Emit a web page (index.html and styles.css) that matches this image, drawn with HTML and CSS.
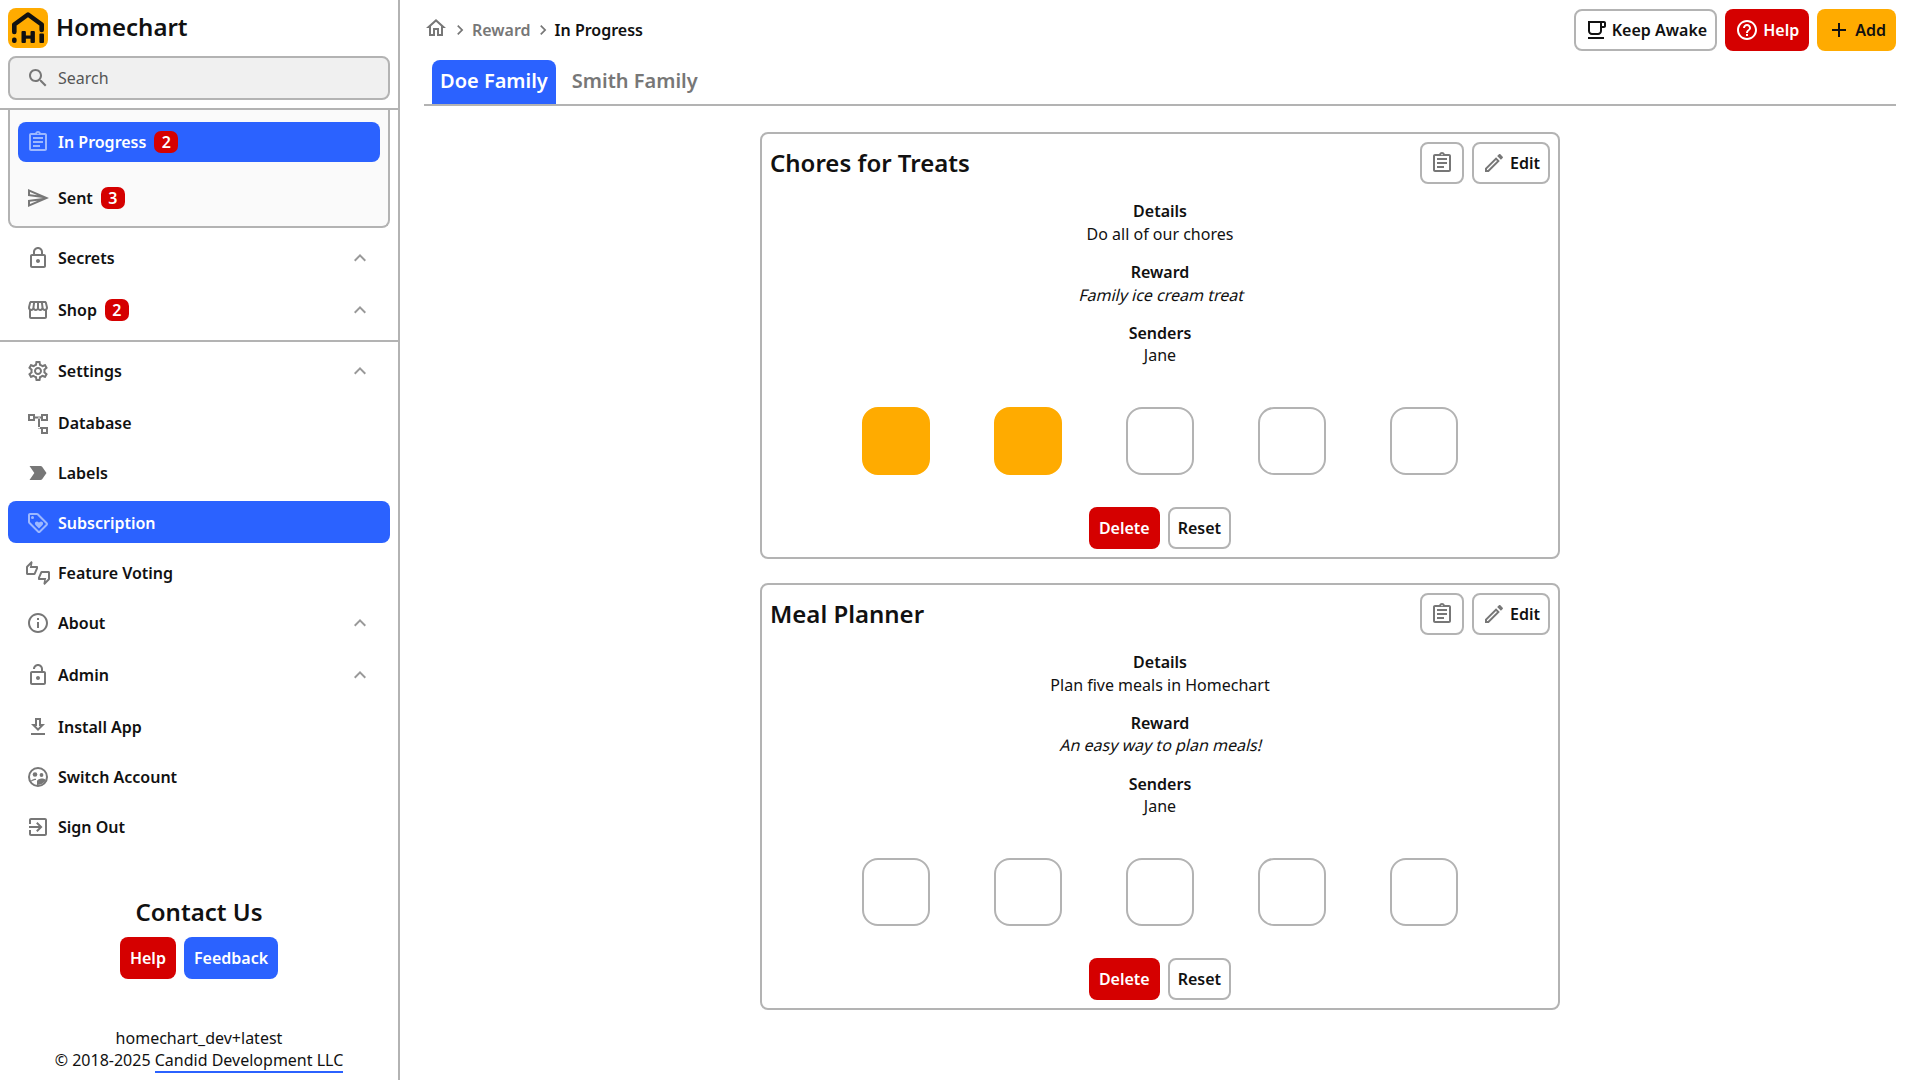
FILE: index.html
```html
<!DOCTYPE html>
<html lang="en">
<head>
    <meta charset="UTF-8">
    <meta name="viewport" content="width=device-width, initial-scale=1.0">
    <title>Homechart</title>
    <link rel="stylesheet" href="styles.css">
</head>
<body>

<!-- icon set -->
<svg class="sprite" xmlns="http://www.w3.org/2000/svg">
    <symbol id="i-search" viewBox="0 0 24 24"><path d="M15.5 14h-.79l-.28-.27C15.41 12.59 16 11.11 16 9.5 16 5.91 13.09 3 9.5 3S3 5.91 3 9.5 5.91 16 9.5 16c1.61 0 3.09-.59 4.23-1.57l.27.28v.79l5 4.99L20.49 19l-4.99-5zm-6 0C7.01 14 5 11.99 5 9.5S7.01 5 9.5 5 14 7.01 14 9.5 11.99 14 9.5 14z"/></symbol>
    <symbol id="i-clipboard" viewBox="0 0 24 24"><path d="M19 3h-4.18C14.4 1.84 13.3 1 12 1s-2.4.84-2.82 2H5c-1.1 0-2 .9-2 2v14c0 1.1.9 2 2 2h14c1.1 0 2-.9 2-2V5c0-1.1-.9-2-2-2zm-7-.25c.41 0 .75.34.75.75s-.34.75-.75.75-.75-.34-.75-.75.34-.75.75-.75zM19 19H5V5h14v14zM7 15h7v2H7zm0-4h10v2H7zm0-4h10v2H7z"/></symbol>
    <symbol id="i-send" viewBox="0 0 24 24"><path d="M4.01 6.03l7.51 3.22-7.52-1 .01-2.22m7.5 8.72L4 17.97v-2.22l7.51-1M2.01 3L2 10l15 2-15 2 .01 7L23 12 2.01 3z"/></symbol>
    <symbol id="i-lock" viewBox="0 0 24 24"><path d="M18 8h-1V6c0-2.76-2.24-5-5-5S7 3.24 7 6v2H6c-1.1 0-2 .9-2 2v10c0 1.1.9 2 2 2h12c1.1 0 2-.9 2-2V10c0-1.1-.9-2-2-2zM9 6c0-1.66 1.34-3 3-3s3 1.34 3 3v2H9V6zm9 14H6V10h12v10zm-6-3c1.1 0 2-.9 2-2s-.9-2-2-2-2 .9-2 2 .9 2 2 2z"/></symbol>
    <symbol id="i-lock-open" viewBox="0 0 24 24"><path d="M12 17c1.1 0 2-.9 2-2s-.9-2-2-2-2 .9-2 2 .9 2 2 2zm6-9h-1V6c0-2.76-2.24-5-5-5S7 3.24 7 6h2c0-1.66 1.34-3 3-3s3 1.34 3 3v2H6c-1.1 0-2 .9-2 2v10c0 1.1.9 2 2 2h12c1.1 0 2-.9 2-2V10c0-1.1-.9-2-2-2zm0 12H6V10h12v10z"/></symbol>
    <symbol id="i-shop" viewBox="0 0 24 24"><path d="M21.9 8.89l-1.05-4.37c-.22-.9-1-1.52-1.91-1.52H5.05c-.9 0-1.69.63-1.9 1.52L2.1 8.89c-.24 1.02-.02 2.06.62 2.88.08.11.19.19.28.29V19c0 1.1.9 2 2 2h14c1.1 0 2-.9 2-2v-6.94c.09-.09.2-.18.28-.28.64-.82.87-1.87.62-2.89zm-2.99-3.9l1.05 4.37c.1.42.01.84-.25 1.17-.14.18-.44.47-.94.47-.61 0-1.14-.49-1.21-1.14L16.98 5l1.93-.01zM13 5h1.96l.54 4.52c.05.39-.07.78-.33 1.07-.22.26-.54.41-.95.41-.67 0-1.22-.59-1.22-1.31V5zM8.49 9.52L9.04 5H11v4.69c0 .72-.55 1.31-1.29 1.31-.34 0-.65-.15-.89-.41-.25-.29-.37-.68-.33-1.07zm-4.45-.16L5.05 5h1.97l-.58 4.86c-.08.65-.6 1.14-1.21 1.14-.49 0-.8-.29-.93-.47-.27-.32-.36-.75-.26-1.17zM5 19v-6.03c.08.01.15.03.23.03.87 0 1.66-.36 2.24-.95.6.6 1.4.95 2.31.95.87 0 1.65-.36 2.23-.93.59.57 1.39.93 2.29.93.84 0 1.64-.35 2.24-.95.58.59 1.37.95 2.24.95.08 0 .15-.02.23-.03V19H5z"/></symbol>
    <symbol id="i-settings" viewBox="0 0 24 24"><path d="M19.43 12.98c.04-.32.07-.64.07-.98 0-.34-.03-.66-.07-.98l2.11-1.65c.19-.15.24-.42.12-.64l-2-3.46c-.09-.16-.26-.25-.44-.25-.06 0-.12.01-.17.03l-2.49 1c-.52-.4-1.08-.73-1.69-.98l-.38-2.65C14.46 2.18 14.25 2 14 2h-4c-.25 0-.46.18-.49.42l-.38 2.65c-.61.25-1.17.59-1.69.98l-2.49-1c-.06-.02-.12-.03-.18-.03-.17 0-.34.09-.43.25l-2 3.46c-.13.22-.07.49.12.64l2.11 1.65c-.04.32-.07.65-.07.98 0 .33.03.66.07.98l-2.11 1.65c-.19.15-.24.42-.12.64l2 3.46c.09.16.26.25.44.25.06 0 .12-.01.17-.03l2.49-1c.52.4 1.08.73 1.69.98l.38 2.65c.03.24.24.42.49.42h4c.25 0 .46-.18.49-.42l.38-2.65c.61-.25 1.17-.59 1.69-.98l2.49 1c.06.02.12.03.18.03.17 0 .34-.09.43-.25l2-3.46c.12-.22.07-.49-.12-.64l-2.11-1.65zm-1.98-1.71c.04.31.05.52.05.73 0 .21-.02.43-.05.73l-.14 1.13.89.7 1.08.84-.7 1.21-1.27-.51-1.04-.42-.9.68c-.43.32-.84.56-1.25.73l-1.06.43-.16 1.13-.2 1.35h-1.4l-.19-1.35-.16-1.13-1.06-.43c-.43-.18-.83-.41-1.23-.71l-.91-.7-1.06.43-1.27.51-.7-1.21 1.08-.84.89-.7-.14-1.13c-.03-.31-.05-.54-.05-.74s.02-.43.05-.73l.14-1.13-.89-.7-1.08-.84.7-1.21 1.27.51 1.04.42.9-.68c.43-.32.84-.56 1.25-.73l1.06-.43.16-1.13.2-1.35h1.39l.19 1.35.16 1.13 1.06.43c.43.18.83.41 1.23.71l.91.7 1.06-.43 1.27-.51.7 1.21-1.07.85-.89.7.14 1.13zM12 8c-2.21 0-4 1.79-4 4s1.79 4 4 4 4-1.79 4-4-1.79-4-4-4zm0 6c-1.1 0-2-.9-2-2s.9-2 2-2 2 .9 2 2-.9 2-2 2z"/></symbol>
    <symbol id="i-database" viewBox="0 0 24 24"><path d="M2 3h7v7H2zm2 2v3h3V5zm11-2h7v7h-7zm2 2v3h3V5zm-2 11h7v7h-7zm2 2v3h3v-3zM9 5.500h6v2H9zm3 1h2v11h-2zm0 9.500h3v2h-3z" fill-rule="evenodd"/></symbol>
    <symbol id="i-label" viewBox="0 0 24 24"><path d="M3.500 18.990l11 .01c.67 0 1.270-.33 1.630-.84L20.500 12l-4.370-6.160c-.36-.51-.96-.84-1.630-.84l-11 .01L8.340 12 3.500 18.990z"/></symbol>
    <symbol id="i-tag" viewBox="0 0 24 24"><path d="M21.410 11.580l-9-9C12.050 2.220 11.550 2 11 2H4c-1.100 0-2 .9-2 2v7c0 .55.22 1.050.59 1.420l9 9c.36.36.86.58 1.410.58s1.050-.22 1.410-.59l7-7c.37-.36.59-.86.59-1.410s-.23-1.060-.59-1.420zM13 20.010L4 11V4h7v-.01l9 8.990-7 7.030z"/><circle cx="6.500" cy="6.500" r="1.500"/><path d="M8.900 12.550c0 .57.23 1.070.6 1.450l3.500 3.500 3.500-3.500c.37-.38.6-.89.6-1.450 0-1.130-.92-2.050-2.050-2.050-.57 0-1.080.23-1.450.61l-.6.59-.6-.6c-.37-.37-.89-.6-1.450-.6-1.130 0-2.050.92-2.050 2.050z"/></symbol>
    <symbol id="i-voting" viewBox="0 0 24 24"><path d="M12 6c0-.55-.45-1-1-1H5.820l.66-3.180.02-.23c0-.31-.13-.59-.33-.8L5.380 0 .44 4.940C.17 5.210 0 5.590 0 6v6.500c0 .83.67 1.500 1.500 1.500h6.750c.62 0 1.150-.38 1.380-.91l2.260-5.290c.07-.17.11-.36.11-.55V6zm-2 1.130L7.920 12H2V6.170l2.520-2.520L3.770 7H10v.13zM22.500 10h-6.750c-.62 0-1.150.38-1.380.91l-2.260 5.290c-.07.17-.11.36-.11.55V18c0 .55.45 1 1 1h5.180l-.66 3.180-.02.24c0 .31.13.59.33.8l.79.78 4.940-4.940c.27-.27.44-.65.44-1.060v-6.500c0-.83-.67-1.500-1.500-1.500zm-.5 7.830l-2.520 2.520.75-3.350H14v-.13L16.080 12H22v5.830z"/></symbol>
    <symbol id="i-info" viewBox="0 0 24 24"><path d="M11 7h2v2h-2zm0 4h2v6h-2zm1-9C6.480 2 2 6.480 2 12s4.480 10 10 10 10-4.480 10-10S17.520 2 12 2zm0 18c-4.410 0-8-3.590-8-8s3.590-8 8-8 8 3.590 8 8-3.590 8-8 8z"/></symbol>
    <symbol id="i-download" viewBox="0 0 24 24"><path d="M19 9h-4V3H9v6H5l7 7 7-7zm-8 2V5h2v6h1.170L12 13.170 9.830 11H11zm-6 7h14v2H5z"/></symbol>
    <symbol id="i-switch" viewBox="0 0 24 24"><path fill-rule="evenodd" d="M12 2a10 10 0 1 0 0 20 10 10 0 0 0 0-20zm0 2a8 8 0 1 1 0 16 8 8 0 0 1 0-16z"/><circle cx="9" cy="9.500" r="2.300"/><circle cx="15.500" cy="10" r="1.900"/><path d="M11 20v-3.500c0-1.800 3-3 4.800-3 1.200 0 3 .4 4 1.300-1 2.800-4.500 5.400-8.800 5.200z"/><path d="M5 15.500c1.300-1.200 3.200-1.800 5-1.800v1.300c-1.500 0-3 .5-4.300 1.500z"/></symbol>
    <symbol id="i-signout" viewBox="0 0 24 24"><path d="M10.090 15.590L11.500 17l5-5-5-5-1.410 1.410L12.670 11H3v2h9.670l-2.580 2.590zM19 3H5c-1.110 0-2 .9-2 2v4h2V5h14v14H5v-4H3v4c0 1.100.89 2 2 2h14c1.100 0 2-.9 2-2V5c0-1.100-.9-2-2-2z"/></symbol>
    <symbol id="i-up" viewBox="0 0 24 24"><path d="M12 8l-6 6 1.410 1.410L12 10.830l4.590 4.580L18 14z"/></symbol>
    <symbol id="i-home" viewBox="0 0 24 24"><path d="M12 5.690l5 4.500V18h-2v-6H9v6H7v-7.810l5-4.500M12 3L2 12h3v8h6v-6h2v6h6v-8h3L12 3z"/></symbol>
    <symbol id="i-right" viewBox="0 0 24 24"><path d="M10 6L8.590 7.410 13.170 12l-4.580 4.590L10 18l6-6z"/></symbol>
    <symbol id="i-coffee" viewBox="0 0 24 24"><path d="M20 3H4v10c0 2.210 1.790 4 4 4h6c2.210 0 4-1.790 4-4v-3h2c1.110 0 2-.9 2-2V5c0-1.110-.89-2-2-2zm-4 10c0 1.100-.9 2-2 2H8c-1.100 0-2-.9-2-2V5h10v8zm4-5h-2V5h2v3zM4 19h16v2H4z"/></symbol>
    <symbol id="i-help" viewBox="0 0 24 24"><path d="M11 18h2v-2h-2v2zm1-16C6.480 2 2 6.480 2 12s4.480 10 10 10 10-4.480 10-10S17.520 2 12 2zm0 18c-4.410 0-8-3.590-8-8s3.590-8 8-8 8 3.590 8 8-3.590 8-8 8zm0-14c-2.210 0-4 1.790-4 4h2c0-1.100.9-2 2-2s2 .9 2 2c0 2-3 1.750-3 5h2c0-2.250 3-2.500 3-5 0-2.210-1.790-4-4-4z"/></symbol>
    <symbol id="i-add" viewBox="0 0 24 24"><path d="M19 13h-6v6h-2v-6H5v-2h6V5h2v6h6v2z"/></symbol>
    <symbol id="i-edit" viewBox="0 0 24 24"><path d="M14.060 9.020l.92.92L5.920 19H5v-.92l9.060-9.060M17.660 3c-.25 0-.51.1-.7.29l-1.830 1.830 3.750 3.750 1.830-1.830c.39-.39.39-1.020 0-1.410l-2.340-2.340c-.2-.2-.45-.29-.71-.29zm-3.600 3.190L3 17.250V21h3.750L17.810 9.940l-3.750-3.750z"/></symbol>
</svg>

<div class="app">

    <!-- sidebar -->
    <aside class="sidebar">
        <div class="side-top">
            <div class="brand">
                <svg class="logo" viewBox="0 0 40 40">
                    <rect width="40" height="40" rx="8" fill="#ffab00"/>
                    <path d="M6.300 24v-7.500L20 6.500l13.700 10V22" fill="none" stroke="#111" stroke-width="4.600" stroke-linejoin="round" stroke-linecap="round"/>
                    <rect x="4" y="29.500" width="4.600" height="5.500" rx="2" fill="#111"/>
                    <rect x="13.500" y="23" width="4.400" height="12" rx="1" fill="#111"/>
                    <rect x="22.500" y="23" width="4.400" height="12" rx="1" fill="#111"/>
                    <rect x="15" y="27.500" width="9" height="3.200" fill="#111"/>
                    <rect x="31.400" y="25.500" width="4.600" height="9.500" rx="1" fill="#111"/>
                </svg>
                <span class="brand-name">Homechart</span>
            </div>
            <div class="search">
                <svg class="icon"><use href="#i-search"/></svg>
                <span>Search</span>
            </div>
        </div>

        <div class="subnav">
            <a class="nav-item nav-current">
                <svg class="icon"><use href="#i-clipboard"/></svg>
                <span>In Progress</span><span class="badge">2</span>
            </a>
            <a class="nav-item">
                <svg class="icon"><use href="#i-send"/></svg>
                <span>Sent</span><span class="badge">3</span>
            </a>
        </div>

        <nav class="nav-group">
            <a class="nav-item nav-tall">
                <svg class="icon"><use href="#i-lock"/></svg>
                <span>Secrets</span>
                <svg class="chevron"><use href="#i-up"/></svg>
            </a>
            <a class="nav-item nav-tall">
                <svg class="icon"><use href="#i-shop"/></svg>
                <span>Shop</span><span class="badge">2</span>
                <svg class="chevron"><use href="#i-up"/></svg>
            </a>
        </nav>

        <nav class="nav-group nav-lower">
            <a class="nav-item nav-tall">
                <svg class="icon"><use href="#i-settings"/></svg>
                <span>Settings</span>
                <svg class="chevron"><use href="#i-up"/></svg>
            </a>
            <a class="nav-item nav-plain">
                <svg class="icon"><use href="#i-database"/></svg>
                <span>Database</span>
            </a>
            <a class="nav-item nav-plain">
                <svg class="icon"><use href="#i-label"/></svg>
                <span>Labels</span>
            </a>
            <a class="nav-item nav-plain nav-selected">
                <svg class="icon"><use href="#i-tag"/></svg>
                <span>Subscription</span>
            </a>
            <a class="nav-item nav-plain">
                <svg class="icon"><use href="#i-voting"/></svg>
                <span>Feature Voting</span>
            </a>
            <a class="nav-item nav-tall">
                <svg class="icon"><use href="#i-info"/></svg>
                <span>About</span>
                <svg class="chevron"><use href="#i-up"/></svg>
            </a>
            <a class="nav-item nav-tall">
                <svg class="icon"><use href="#i-lock-open"/></svg>
                <span>Admin</span>
                <svg class="chevron"><use href="#i-up"/></svg>
            </a>
            <a class="nav-item nav-plain">
                <svg class="icon"><use href="#i-download"/></svg>
                <span>Install App</span>
            </a>
            <a class="nav-item nav-plain">
                <svg class="icon"><use href="#i-switch"/></svg>
                <span>Switch Account</span>
            </a>
            <a class="nav-item nav-plain">
                <svg class="icon"><use href="#i-signout"/></svg>
                <span>Sign Out</span>
            </a>
        </nav>

        <div class="contact">
            <h2>Contact Us</h2>
            <div class="contact-btns">
                <button class="btn btn-red">Help</button>
                <button class="btn btn-blue">Feedback</button>
            </div>
        </div>

        <footer class="side-footer">
            <div>homechart_dev+latest</div>
            <div>© 2018-2025 <a class="link">Candid Development LLC</a></div>
        </footer>
    </aside>

    <!-- main area -->
    <main class="main">
        <div class="topbar">
            <div class="crumbs">
                <svg class="crumb-home"><use href="#i-home"/></svg>
                <svg class="crumb-sep"><use href="#i-right"/></svg>
                <span class="crumb-muted">Reward</span>
                <svg class="crumb-sep"><use href="#i-right"/></svg>
                <span>In Progress</span>
            </div>
            <div class="top-actions">
                <button class="btn btn-line"><svg class="btn-icon icon-dark"><use href="#i-coffee"/></svg>Keep Awake</button>
                <button class="btn btn-red"><svg class="btn-icon icon-white"><use href="#i-help"/></svg>Help</button>
                <button class="btn btn-orange"><svg class="btn-icon icon-dark"><use href="#i-add"/></svg>Add</button>
            </div>
        </div>

        <div class="tabs">
            <a class="tab tab-active">Doe Family</a>
            <a class="tab">Smith Family</a>
        </div>

        <section class="cards">
            <article class="card">
                <div class="card-head">
                    <h2>Chores for Treats</h2>
                    <div class="card-actions">
                        <button class="btn btn-line btn-square"><svg class="icon"><use href="#i-clipboard"/></svg></button>
                        <button class="btn btn-line"><svg class="btn-icon"><use href="#i-edit"/></svg>Edit</button>
                    </div>
                </div>
                <div class="field"><b>Details</b><span>Do all of our chores</span></div>
                <div class="field"><b>Reward</b><span class="slanted">Family ice cream treat</span></div>
                <div class="field"><b>Senders</b><span>Jane</span></div>
                <div class="stamps">
                    <div class="stamp stamp-on"></div>
                    <div class="stamp stamp-on"></div>
                    <div class="stamp"></div>
                    <div class="stamp"></div>
                    <div class="stamp"></div>
                </div>
                <div class="card-foot">
                    <button class="btn btn-red">Delete</button>
                    <button class="btn btn-line">Reset</button>
                </div>
            </article>

            <article class="card">
                <div class="card-head">
                    <h2>Meal Planner</h2>
                    <div class="card-actions">
                        <button class="btn btn-line btn-square"><svg class="icon"><use href="#i-clipboard"/></svg></button>
                        <button class="btn btn-line"><svg class="btn-icon"><use href="#i-edit"/></svg>Edit</button>
                    </div>
                </div>
                <div class="field"><b>Details</b><span>Plan five meals in Homechart</span></div>
                <div class="field"><b>Reward</b><span class="slanted">An easy way to plan meals!</span></div>
                <div class="field"><b>Senders</b><span>Jane</span></div>
                <div class="stamps">
                    <div class="stamp"></div>
                    <div class="stamp"></div>
                    <div class="stamp"></div>
                    <div class="stamp"></div>
                    <div class="stamp"></div>
                </div>
                <div class="card-foot">
                    <button class="btn btn-red">Delete</button>
                    <button class="btn btn-line">Reset</button>
                </div>
            </article>
        </section>
    </main>
</div>

</body>
</html>
```

FILE: styles.css
```css
* {
    box-sizing: border-box;
}
html, body {
    height: 100%;
}
body {
    font-family: "Noto Sans", sans-serif;
    font-size: 16px;
    line-height: 22.4px;
    background-color: #fff;
    color: #111;
    margin: 0;
    overflow: hidden;
}
h2 {
    margin: 0;
    font-size: 24px;
    line-height: 32px;
    font-weight: 600;
}
.sprite {
    display: none;
}
.app {
    display: flex;
    height: 100vh;
}

/* sidebar */
.sidebar {
    width: 400px;
    flex: none;
    border-right: 2px solid #b3b3b3;
    display: flex;
    flex-direction: column;
}
.side-top {
    padding: 8px;
    border-bottom: 2px solid #b3b3b3;
}
.brand {
    display: flex;
    align-items: center;
    gap: 8px;
    height: 40px;
    margin-bottom: 8px;
}
.logo {
    width: 40px;
    height: 40px;
}
.brand-name {
    font-size: 24px;
    font-weight: 600;
    padding-bottom: 1px;
}
.search {
    display: flex;
    align-items: center;
    gap: 8px;
    height: 44px;
    padding-left: 16px;
    background-color: #f0f0f0;
    border: 2px solid #b3b3b3;
    border-radius: 8px;
    color: #555;
}
.icon {
    width: 24px;
    height: 24px;
    flex: none;
    fill: #777;
}
.subnav {
    margin: 0 8px;
    padding: 12px 8px 8px;
    background-color: #fafafa;
    border: 2px solid #b3b3b3;
    border-top: none;
    border-radius: 0 0 8px 8px;
    display: flex;
    flex-direction: column;
    gap: 16px;
}
.nav-item {
    display: flex;
    align-items: center;
    gap: 8px;
    height: 42px;
    padding: 0 18px;
    font-weight: 600;
    border-radius: 8px;
}
.subnav .nav-item {
    height: 40px;
    padding: 0 8px;
}
.nav-tall {
    height: 44px;
}
.nav-plain {
    padding-top: 2px;
}
.nav-current, .nav-selected {
    background-color: #2b62ff;
    color: #fff;
}
.nav-current .icon, .nav-selected .icon {
    fill: #9db8ff;
}
.badge {
    width: 24px;
    height: 22px;
    border-radius: 7px;
    background-color: #d50000;
    color: #fff;
    line-height: 22px;
    text-align: center;
}
.chevron {
    width: 24px;
    height: 24px;
    margin-left: auto;
    fill: #999;
}
.nav-group {
    display: flex;
    flex-direction: column;
    gap: 8px;
    padding: 8px;
}
.nav-lower {
    border-top: 2px solid #b3b3b3;
    padding-top: 7px;
}
.contact {
    margin-top: 41px;
    text-align: center;
}
.contact-btns {
    display: flex;
    justify-content: center;
    gap: 8px;
    margin-top: 9px;
}
.side-footer {
    margin-top: 48px;
    text-align: center;
}
.link {
    border-bottom: 2px solid #2b62ff;
}

/* buttons */
.btn {
    display: inline-flex;
    align-items: center;
    height: 42px;
    padding: 0 10px;
    border: none;
    border-radius: 8px;
    font-family: inherit;
    font-size: 16px;
    font-weight: 600;
    color: #111;
    background: none;
}
.btn-red {
    background-color: #d50000;
    color: #fff;
}
.btn-blue {
    background-color: #2b62ff;
    color: #fff;
}
.btn-orange {
    background-color: #ffab00;
}
.btn-line {
    border: 2px solid #b3b3b3;
    background-color: #fff;
    padding: 0 8px;
}
.btn-square {
    width: 44px;
    justify-content: center;
    padding: 0;
}
.btn-icon {
    width: 24px;
    height: 24px;
    margin-right: 4px;
    fill: #777;
}
.icon-dark {
    fill: #111;
}
.icon-white {
    fill: #fff;
}

/* main area */
.main {
    flex: 1;
    min-width: 0;
    padding: 9px 24px 0;
}
.topbar {
    display: flex;
    justify-content: space-between;
    align-items: flex-start;
}
.crumbs {
    display: flex;
    align-items: center;
    gap: 2px;
    height: 42px;
    font-weight: 600;
}
.crumb-home {
    width: 24px;
    height: 24px;
    margin-top: -4px;
    fill: #777;
}
.crumb-sep {
    width: 20px;
    height: 20px;
    fill: #777;
}
.crumb-muted {
    color: #777;
}
.top-actions {
    display: flex;
    gap: 8px;
}
.tabs {
    display: flex;
    height: 46px;
    margin-top: 9px;
    padding-left: 8px;
    border-bottom: 2px solid #b3b3b3;
}
.tab {
    display: flex;
    align-items: center;
    height: 44px;
    margin-right: 8px;
    padding: 0 8px 1px;
    border-radius: 8px 8px 0 0;
    font-size: 20px;
    font-weight: 600;
    color: #777;
}
.tab-active {
    background-color: #2b62ff;
    color: #fff;
}
.cards {
    width: 800px;
    margin: 26px auto 0;
    display: flex;
    flex-direction: column;
    gap: 24px;
}
.card {
    border: 2px solid #b3b3b3;
    border-radius: 8px;
    padding: 8px;
    text-align: center;
}
.card-head {
    display: flex;
    justify-content: space-between;
    align-items: center;
    margin-bottom: 16.400px;
    text-align: left;
}
.card-actions {
    display: flex;
    gap: 8px;
}
.field {
    display: flex;
    flex-direction: column;
    margin-bottom: 16px;
}
.field b {
    font-weight: 600;
}
/* the reference slants the upright face, so widths stay upright */
.slanted {
    align-self: center;
    transform: skewX(-14deg);
    transform-origin: 50% 80%;
}
.stamps {
    display: flex;
    justify-content: center;
    gap: 64px;
    margin-top: 40px;
}
.stamp {
    width: 68px;
    height: 68px;
    border: 2px solid #b3b3b3;
    border-radius: 16px;
}
.stamp-on {
    background-color: #ffab00;
    border-color: #ffab00;
}
.card-foot {
    display: flex;
    justify-content: center;
    gap: 8px;
    margin-top: 32px;
}
```
